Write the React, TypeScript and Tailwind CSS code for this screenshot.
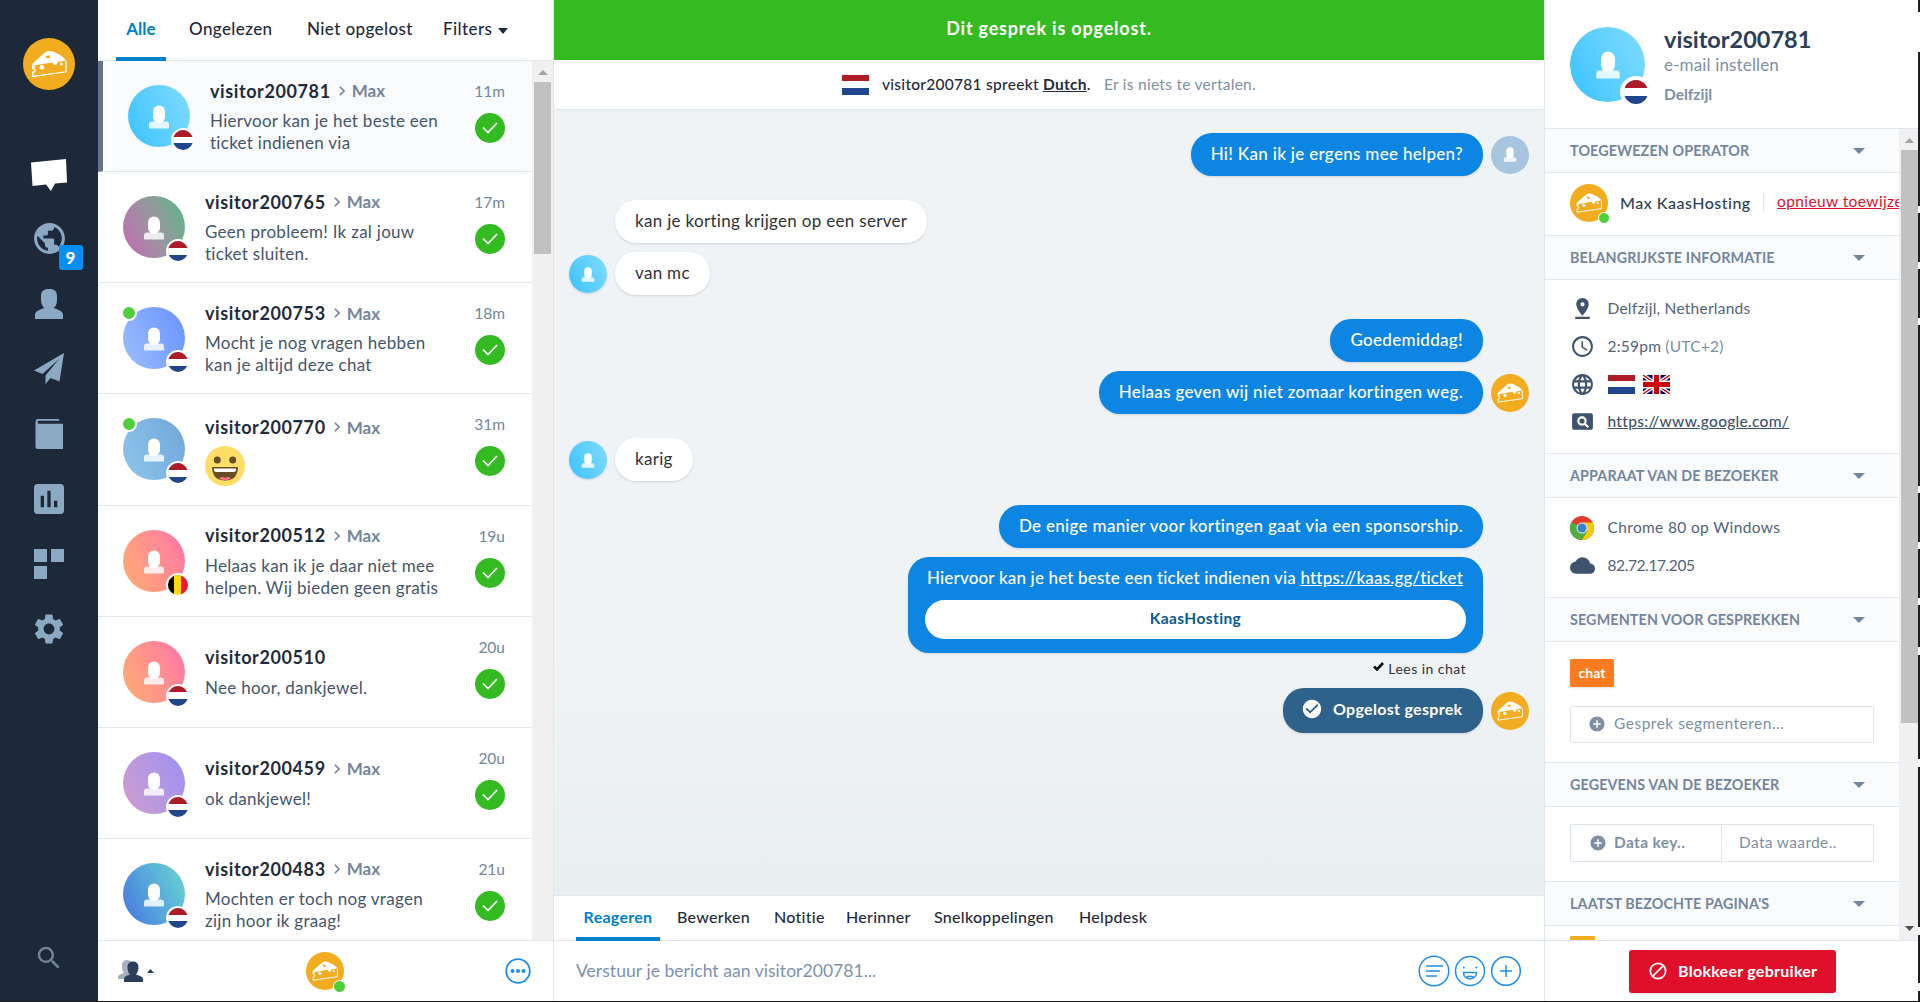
import type { ReactNode } from "react";
import {
  MdAccessTime,
  MdAddCircle,
  MdCheckCircle,
  MdCloud,
  MdInsertChart,
  MdLanguage,
  MdPageview,
  MdPinDrop,
  MdPublic,
  MdSearch,
  MdSettings,
} from "react-icons/md";

type Country = "nl" | "be";

interface Conversation {
  visitor: string;
  operator?: string;
  lines: string[];
  emoji?: boolean;
  time: string;
  gradient: string;
  country: Country;
  online?: boolean;
  active?: boolean;
}

const conversations: Conversation[] = [
  { visitor: "visitor200781", operator: "Max", lines: ["Hiervoor kan je het beste een", "ticket indienen via"], time: "11m", gradient: "from-[#35c2ff] to-[#7fdcff]", country: "nl", active: true },
  { visitor: "visitor200765", operator: "Max", lines: ["Geen probleem! Ik zal jouw", "ticket sluiten."], time: "17m", gradient: "from-[#c365b5] to-[#4bb885]", country: "nl" },
  { visitor: "visitor200753", operator: "Max", lines: ["Mocht je nog vragen hebben", "kan je altijd deze chat"], time: "18m", gradient: "from-[#9dbdfb] to-[#6692ff]", country: "nl", online: true },
  { visitor: "visitor200770", operator: "Max", lines: [], emoji: true, time: "31m", gradient: "from-[#8fc6ec] to-[#6fa6d8]", country: "nl", online: true },
  { visitor: "visitor200512", operator: "Max", lines: ["Helaas kan ik je daar niet mee", "helpen. Wij bieden geen gratis"], time: "19u", gradient: "from-[#ffae6c] to-[#ff72a6]", country: "be" },
  { visitor: "visitor200510", lines: ["Nee hoor, dankjewel."], time: "20u", gradient: "from-[#ffae6c] to-[#ff72a6]", country: "nl" },
  { visitor: "visitor200459", operator: "Max", lines: ["ok dankjewel!"], time: "20u", gradient: "from-[#d09dcf] to-[#9d90f2]", country: "nl" },
  { visitor: "visitor200483", operator: "Max", lines: ["Mochten er toch nog vragen", "zijn hoor ik graag!"], time: "21u", gradient: "from-[#4974e0] to-[#6bd8cf]", country: "nl" },
];

function CheeseLogo({ className }: { className: string }) {
  return (
    <svg viewBox="0 0 52 52" className={className}>
      <circle cx="26" cy="26" r="26" fill="#f2ac20" />
      <path d="M9 26 L22.5 14 Q25.5 12 30 13.6 Q38 16.5 43 22.2 L38.5 23.4 Q37.5 24 35 23.6 Q34.5 27.5 31.8 27 Q29.8 26.6 29.5 24.4 L10 27.6 Z" fill="#fff" />
      <path d="M9.7 26.5 L9.7 30.5 Q12.5 31 12 33 Q11.5 34.5 9.7 34 L9.7 38.5 L43 33.8 L43 22.8" fill="none" stroke="#fff" strokeWidth="1.3" />
      <circle cx="19" cy="29.3" r="2.3" fill="#fff" />
      <circle cx="38.3" cy="26" r="1.5" fill="#fff" />
      <circle cx="11.3" cy="28.8" r="1.1" fill="#fff" />
      <ellipse cx="25" cy="19" rx="2.2" ry="1.4" fill="#f2ac20" />
    </svg>
  );
}

function Person({ className }: { className: string }) {
  return (
    <svg viewBox="0 0 22 24" className={className} fill="#fff">
      <path d="M1 23.5 V19.5 Q1 16.5 4 16.5 H18 Q21 16.5 21 19.5 V23.5 Z" opacity="0.82" />
      <rect x="5" y="0.5" width="12" height="17.5" rx="6" />
    </svg>
  );
}

function RoundFlag({ country, className }: { country: Country; className: string }) {
  return (
    <span className={`absolute overflow-hidden rounded-full border-white ${className}`}>
      {country === "nl" ? (
        <span className="flex h-full flex-col">
          <span className="flex-1 bg-[#ae1c28]" />
          <span className="flex-1 bg-white" />
          <span className="flex-1 bg-[#21468b]" />
        </span>
      ) : (
        <span className="flex h-full">
          <span className="flex-1 bg-black" />
          <span className="flex-1 bg-[#ffd90c]" />
          <span className="flex-1 bg-[#f31830]" />
        </span>
      )}
    </span>
  );
}

function DutchFlag({ className }: { className: string }) {
  return (
    <span className={`flex flex-col ${className}`}>
      <span className="flex-1 bg-[#ae1c28]" />
      <span className="flex-1 bg-white" />
      <span className="flex-1 bg-[#21468b]" />
    </span>
  );
}

function BritishFlag({ className }: { className: string }) {
  return (
    <svg viewBox="0 0 27 19" className={className}>
      <rect width="27" height="19" fill="#006" />
      <path d="M0 0 L27 19 M27 0 L0 19" stroke="#fff" strokeWidth="4" />
      <path d="M0 0 L27 19 M27 0 L0 19" stroke="#c00" strokeWidth="1.4" />
      <path d="M13.5 0 V19 M0 9.5 H27" stroke="#fff" strokeWidth="8" />
      <path d="M13.5 0 V19 M0 9.5 H27" stroke="#c00" strokeWidth="5" />
    </svg>
  );
}

function Caret({ className, up }: { className: string; up?: boolean }) {
  return (
    <svg viewBox="0 0 12 6" preserveAspectRatio="none" className={className} fill="currentColor">
      <path d={up ? "M0 6 L6 0 L12 6 Z" : "M0 0 H12 L6 6 Z"} />
    </svg>
  );
}

function GrinEmoji() {
  return (
    <svg viewBox="0 0 40 40" className="h-10 w-10">
      <circle cx="20" cy="20" r="20" fill="#ffdd67" />
      <circle cx="12.3" cy="14" r="3.5" fill="#664e27" />
      <circle cx="27.7" cy="14" r="3.5" fill="#664e27" />
      <path d="M7 22 Q7 21 8 21 H32 Q33 21 33 22 Q32 34.5 20 34.5 Q8 34.5 7 22 Z" fill="#664e27" />
      <path d="M9 22.5 H31 V24 Q31 26 29 26 H11 Q9 26 9 24 Z" fill="#fff" />
      <path d="M14 32.5 Q17 30 20 32 Q23 30 26 32.5 Q20 36 14 32.5 Z" fill="#ff717f" />
    </svg>
  );
}

function NavSlot({ children }: { children: ReactNode }) {
  return <div className="flex h-[65px] w-full items-center justify-center">{children}</div>;
}

function Sidebar() {
  return (
    <nav className="flex w-[98px] shrink-0 flex-col items-center bg-[#1d2939] pt-[38px] text-[#8ba9c3]">
      <CheeseLogo className="h-[52px] w-[52px]" />
      <div className="mt-[51px] flex w-full flex-col">
        <NavSlot>
          <svg viewBox="0 0 36 32" className="mt-[2px] h-8 w-9" fill="#fff">
            <path d="M0 3.5 L35 0 L36 23.5 L24 24.5 L20 32 L15 25.5 L1.5 27 Z" />
          </svg>
        </NavSlot>
        <NavSlot>
          <div className="relative">
            <MdPublic className="h-[37px] w-[37px]" />
            <span className="absolute top-[25px] left-[28px] flex h-[25px] w-6 items-center justify-center rounded-[3px] bg-[#058ff0] text-[17px] font-black text-white">9</span>
          </div>
        </NavSlot>
        <NavSlot>
          <svg viewBox="0 0 28 30" className="h-[30px] w-7" fill="currentColor">
            <path d="M14 0 C19.5 0 22 2.5 22 7 V11 C22 15 20.5 17.5 18.5 19 C23.5 20.5 28 22.5 28 25.5 V30 H0 V25.5 C0 22.5 4.5 20.5 9.5 19 C7.5 17.5 6 15 6 11 V7 C6 2.5 8.5 0 14 0 Z" />
          </svg>
        </NavSlot>
        <NavSlot>
          <svg viewBox="0 0 30 31" className="h-[31px] w-[30px]" fill="currentColor">
            <path d="M30 0 L0 17.5 L8.5 21 L25 6 L11.5 22.5 L11.5 31 L16.5 25 L25.5 28.5 Z" />
          </svg>
        </NavSlot>
        <NavSlot>
          <svg viewBox="0 0 28 30" className="h-[30px] w-7" fill="currentColor">
            <path d="M3 0 H23 Q24.5 0 24.5 1.7 H4 Q2.5 1.7 2.5 3 Q2.5 4.8 4 4.8 H28 V30 H3 Q0.5 30 0.5 27.5 V3 Q0.5 0 3 0 Z" />
          </svg>
        </NavSlot>
        <NavSlot>
          <MdInsertChart className="h-10 w-10" />
        </NavSlot>
        <NavSlot>
          <svg viewBox="0 0 30 30" className="h-[30px] w-[30px]" fill="currentColor">
            <rect width="13" height="13" />
            <rect x="17" width="13" height="13" />
            <rect y="17" width="13" height="13" />
          </svg>
        </NavSlot>
        <NavSlot>
          <MdSettings className="h-9 w-9" />
        </NavSlot>
      </div>
      <MdSearch className="mt-auto mb-7 h-[30px] w-[30px] text-[#73859b]" />
    </nav>
  );
}

function ConversationRow({ item }: { item: Conversation }) {
  return (
    <div
      className={`flex h-[111.15px] shrink-0 items-center border-b border-[#e1e7ef] pr-[27px] ${
        item.active ? "border-l-[5px] border-l-[#657287] bg-[#f9fbfd]" : "bg-white"
      }`}
    >
      <div className="relative ml-[25px] shrink-0">
        <div className={`flex h-[62px] w-[62px] items-center justify-center rounded-full bg-linear-65 ${item.gradient}`}>
          <Person className="mt-[2px] h-6 w-[22px]" />
        </div>
        <RoundFlag country={item.country} className="right-[-4.5px] bottom-[-5px] h-6 w-6 border-[2.5px]" />
        {item.online && <span className="absolute top-[-2px] left-[-2px] h-[16px] w-[16px] rounded-full border-2 border-white bg-[#4fcf3b]" />}
      </div>
      <div className="ml-5 flex-1 pt-px">
        <div className="flex h-6 items-center whitespace-nowrap text-[18px] font-bold tracking-[0.6px] text-[#1f2b3d]">
          {item.visitor}
          {item.operator && (
            <>
              <svg viewBox="0 0 6 10" className="mr-[7px] ml-2 h-[10px] w-[6px]" fill="none" stroke="#74859e" strokeWidth="1.6">
                <path d="M0.8 0.8 L5 5 L0.8 9.2" />
              </svg>
              <span className="text-[17px] tracking-normal text-[#74859e]">{item.operator}</span>
            </>
          )}
        </div>
        {item.emoji ? (
          <div className="mt-[7px] h-[38px]">
            <GrinEmoji />
          </div>
        ) : (
          <div className="mt-[7px] text-[17px] leading-[22px] tracking-[0.28px] whitespace-nowrap text-[#45556d]">
            {item.lines.map((line) => (
              <div key={line}>{line}</div>
            ))}
          </div>
        )}
      </div>
      <div className="flex flex-col items-end">
        <span className="h-[38px] text-[15.5px] leading-[32px] text-[#74859e]">{item.time}</span>
        <span className="mb-[14px] flex h-[30px] w-[30px] items-center justify-center rounded-full bg-[#34bb21]">
          <svg viewBox="0 0 16 12" className="h-3 w-4" fill="none" stroke="#fff" strokeWidth="1.7">
            <path d="M1 5.5 L6 10.5 L15 1" />
          </svg>
        </span>
      </div>
    </div>
  );
}

function ConversationList() {
  return (
    <section className="flex w-[456px] shrink-0 flex-col border-r border-[#dfe6ee] bg-white">
      <div className="flex h-[61px] shrink-0 border-b border-[#e1e7ef] pl-[18px] text-[17px] font-medium tracking-[0.4px] whitespace-nowrap text-[#1f2b3d]">
        <div className="relative flex w-[50px] items-center justify-center pb-[3px] font-bold tracking-normal text-[#0080c8]">
          Alle
          <span className="absolute bottom-[-1px] left-0 h-1 w-full bg-[#0080c8]" />
        </div>
        <div className="ml-[23px] flex w-[118px] items-center pb-[3px]">Ongelezen</div>
        <div className="flex w-[136px] items-center pb-[3px]">Niet opgelost</div>
        <div className="flex items-center pb-[3px]">
          Filters
          <Caret className="mt-1 ml-[6px] h-[6px] w-[10px]" />
        </div>
      </div>
      <div className="flex min-h-0 flex-1">
        <div className="flex min-w-0 flex-1 flex-col overflow-hidden">
          {conversations.map((item) => (
            <ConversationRow key={item.visitor} item={item} />
          ))}
        </div>
        <div className="flex w-[21px] flex-col items-center bg-[#f0f0f0] pt-[9px]">
          <Caret up className="h-[5px] w-[10px] text-[#a3a3a3]" />
          <div className="mt-[7px] h-[172px] w-[17px] bg-[#c1c1c1]" />
        </div>
      </div>
      <div className="flex h-[61px] shrink-0 items-center border-t border-[#e1e7ef] pr-[22px] pl-5">
        <svg viewBox="0 0 25 22" className="h-[22px] w-[25px]">
          <path d="M9 0 C13 0 14 3 14 6 C14 10 12 12 11 13 C14 14 17 15 17 19 H0 V17 C0 15 3 14 6 13 C4 11 4 9 4 6 C4 3 5 0 9 0 Z" fill="#a5b1bf" />
          <path d="M15 1.5 C19 1.5 20.5 4 20.5 7.5 C20.5 11 19 13 18 14.5 C21 15.5 25 16.5 25 19.5 V22 H6 V19.5 C6 16.5 9 15.5 12 14.5 C10.5 13 9.5 11 9.5 7.5 C9.5 4 11 1.5 15 1.5 Z" fill="#2c3f5a" />
        </svg>
        <Caret up className="ml-1 h-1 w-[7px] text-[#2c3f5a]" />
        <div className="relative mr-auto ml-[152px]">
          <CheeseLogo className="h-[38px] w-[38px]" />
          <span className="absolute right-[-2px] bottom-[-3px] h-[13px] w-[13px] rounded-full border border-white bg-[#4fcf3b]" />
        </div>
        <svg viewBox="0 0 26 26" className="h-[26px] w-[26px]" fill="none" stroke="#1e8ff0" strokeWidth="1.8">
          <circle cx="13" cy="13" r="11.8" />
          <g fill="#1e8ff0" stroke="none">
            <circle cx="7.5" cy="13" r="2" />
            <circle cx="13" cy="13" r="2" />
            <circle cx="18.5" cy="13" r="2" />
          </g>
        </svg>
      </div>
    </section>
  );
}

function VisitorBubble({ children, avatar, last }: { children: string; avatar?: boolean; last?: boolean }) {
  return (
    <div className={`flex h-[43px] items-center ${last ? "mb-6" : "mb-[9px]"}`}>
      {avatar ? (
        <div className="mt-[1px] mr-[8px] flex h-[38px] w-[38px] items-center justify-center rounded-full bg-linear-65 from-[#35c2ff] to-[#7fdcff] shadow-sm">
          <Person className="h-[15px] w-[14px]" />
        </div>
      ) : (
        <div className="w-[46px]" />
      )}
      <div className="flex h-[43px] items-center rounded-[21px] bg-white px-5 pb-[2px] text-[17px] tracking-[0.31px] text-[#2f3338] shadow-sm">{children}</div>
    </div>
  );
}

function OperatorBubble({ children, avatar, last }: { children: string; avatar?: ReactNode; last?: boolean }) {
  return (
    <div className={`flex h-[43px] items-center justify-end ${last ? "mb-6" : "mb-[9px]"}`}>
      <div className="flex h-[43px] items-center rounded-[21px] bg-[#0d85e2] px-5 pb-[2px] text-[17px] font-medium tracking-[0.31px] text-white shadow-sm">{children}</div>
      <div className="ml-2 h-[38px] w-[38px]">{avatar}</div>
    </div>
  );
}

function ChatPanel() {
  return (
    <main className="flex w-[990px] shrink-0 flex-col bg-white">
      <div className="flex h-[60px] shrink-0 items-center justify-center bg-[#34bb21] pb-1 text-[18px] font-bold tracking-[0.8px] text-white">Dit gesprek is opgelost.</div>
      <div className="flex h-[50px] shrink-0 items-center border-b border-[#dde4ea] bg-white pl-[288px] text-[15.5px] tracking-[0.27px] whitespace-nowrap text-[#1f2b3d]">
        <DutchFlag className="h-5 w-[27px]" />
        <span className="ml-[13px] w-[222px] font-medium">
          visitor200781 spreekt <span className="font-bold underline">Dutch</span>.
        </span>
        <span className="text-[#7e8fa6]">Er is niets te vertalen.</span>
      </div>
      <div className="flex min-h-0 flex-1 flex-col bg-linear-to-b from-[#eff3f6] from-70% to-[#e9eef1] pt-[23px] pr-[15px] pl-[15px]">
        <OperatorBubble
          last
          avatar={
            <div className="flex h-[38px] w-[38px] items-center justify-center rounded-full bg-[#a8c5e0]">
              <Person className="h-[15px] w-[14px]" />
            </div>
          }
        >
          Hi! Kan ik je ergens mee helpen?
        </OperatorBubble>
        <VisitorBubble>kan je korting krijgen op een server</VisitorBubble>
        <VisitorBubble avatar last>van mc</VisitorBubble>
        <OperatorBubble>Goedemiddag!</OperatorBubble>
        <OperatorBubble last avatar={<CheeseLogo className="h-[38px] w-[38px]" />}>
          Helaas geven wij niet zomaar kortingen weg.
        </OperatorBubble>
        <VisitorBubble avatar last>karig</VisitorBubble>
        <OperatorBubble>De enige manier voor kortingen gaat via een sponsorship.</OperatorBubble>
        <div className="mr-[46px] flex h-24 w-[575px] flex-col self-end rounded-[21px] bg-[#0d85e2] px-[17px] pt-2 text-[17px] font-medium text-white shadow-sm">
          <div className="h-[35px] pl-[2px] tracking-[0.17px] whitespace-nowrap">
            Hiervoor kan je het beste een ticket indienen via <span className="underline">https://kaas.gg/ticket</span>
          </div>
          <div className="flex h-[39px] items-center justify-center rounded-full bg-white pb-[2px] text-[15.5px] font-bold tracking-[0.4px] text-[#085a96]">KaasHosting</div>
        </div>
        <div className="mt-[4px] mr-[63px] flex h-[22px] items-center self-end text-[14px] tracking-[0.45px] text-[#2f3338]">
          <svg viewBox="0 0 11 9" className="mr-1 mb-1 h-[9px] w-[11px]" fill="none" stroke="#111" strokeWidth="2.6">
            <path d="M1 4.5 L4 7.5 L10 1" />
          </svg>
          Lees in chat
        </div>
        <div className="mt-[9px] flex items-center justify-end">
          <div className="flex h-[45px] w-[200px] items-center rounded-[21px] bg-[#2e628b] pb-[4px] pl-[18px] text-[16px] font-bold tracking-[0.3px] whitespace-nowrap text-white shadow-sm">
            <MdCheckCircle className="mr-[10px] h-[22px] w-[22px]" />
            Opgelost gesprek
          </div>
          <CheeseLogo className="mt-[1px] ml-2 h-[38px] w-[38px]" />
        </div>
      </div>
      <div className="flex h-[46px] shrink-0 border-y border-[#e1e7ef] pl-[22px] text-[16px] font-medium tracking-[0.28px] whitespace-nowrap text-[#1f2b3d]">
        <div className="relative flex w-[84px] items-center justify-center pb-[2px] font-bold text-[#0080c8]">
          Reageren
          <span className="absolute bottom-[-1px] left-0 h-1 w-full bg-[#0080c8]" />
        </div>
        <div className="ml-[17px] flex w-[97px] items-center pb-[2px]">Bewerken</div>
        <div className="flex w-[72px] items-center pb-[2px]">Notitie</div>
        <div className="flex w-[88px] items-center pb-[2px]">Herinner</div>
        <div className="flex w-[145px] items-center pb-[2px]">Snelkoppelingen</div>
        <div className="flex items-center pb-[2px]">Helpdesk</div>
      </div>
      <div className="flex h-[60px] shrink-0 items-center pr-[22px] pl-[22px] text-[17.5px] tracking-[0.05px] text-[#7e92ad]">
        <span className="flex-1">Verstuur je bericht aan visitor200781...</span>
        <div className="flex gap-1">
          <svg viewBox="0 0 32 32" className="h-8 w-8" fill="none" stroke="#1e8ff0" strokeWidth="1.5">
            <circle cx="16" cy="16" r="14.8" />
            <path d="M8 11 H25 M8 16 H22 M8 21 H19" />
          </svg>
          <svg viewBox="0 0 32 32" className="h-8 w-8" fill="none" stroke="#1e8ff0" strokeWidth="1.5">
            <circle cx="16" cy="16" r="14.5" />
            <path d="M9.5 17.5 H22.5 C22.5 26 9.5 26 9.5 17.5 Z M12 22.5 Q16 20 20 22.5" />
            <circle cx="9.8" cy="12.5" r="1" fill="#1e8ff0" stroke="none" />
            <circle cx="22.3" cy="12.5" r="1" fill="#1e8ff0" stroke="none" />
          </svg>
          <svg viewBox="0 0 32 32" className="h-8 w-8" fill="none" stroke="#1e8ff0" strokeWidth="1.5">
            <circle cx="16" cy="16" r="14.3" />
            <path d="M16 10 V22 M10 16 H22" />
          </svg>
        </div>
      </div>
    </main>
  );
}

function SectionHeader({ title }: { title: string }) {
  return (
    <div className="flex h-11 shrink-0 items-center justify-between border-b border-[#e1e7ef] bg-[#f9fbfd] pr-[34px] pl-[25px] text-[14.3px] font-bold tracking-[0.14px] text-[#74859e]">
      {title}
      <Caret className="h-[6px] w-3" />
    </div>
  );
}

function InfoRow({ icon, children }: { icon: ReactNode; children: ReactNode }) {
  return (
    <div className="flex h-[37.67px] items-center text-[15.5px] tracking-[0.25px] text-[#52637c]">
      <span className="mr-[13px] flex w-[25px] justify-center text-[#40536e]">{icon}</span>
      {children}
    </div>
  );
}

function ChromeLogo() {
  return (
    <svg viewBox="0 0 24 24" className="h-6 w-6">
      <circle cx="12" cy="12" r="12" fill="#e33b2e" />
      <path d="M12 12 L1.6 6 A12 12 0 0 0 12 24 L17.2 15 Z" fill="#4caf40" />
      <path d="M12 12 L12 24 A12 12 0 0 0 22.6 6.5 L12 6.5 Z" fill="#f7cb05" />
      <path d="M6.5 13 L17.5 15 L12 24 Z" fill="#4caf40" />
      <circle cx="12" cy="12" r="5.5" fill="#dfeaf5" />
      <circle cx="12" cy="12" r="4.5" fill="#3b82c8" />
    </svg>
  );
}

function DetailsPanel() {
  return (
    <aside className="flex w-[374px] shrink-0 flex-col border-l border-[#dfe6ee] bg-white">
      <div className="flex h-[129px] shrink-0 border-b border-[#e1e7ef] pt-[27px] pl-[25px]">
        <div className="relative h-[75px] w-[75px]">
          <div className="flex h-full w-full items-center justify-center rounded-full bg-linear-65 from-[#35c2ff] to-[#7fdcff]">
            <Person className="h-7 w-[28px]" />
          </div>
          <RoundFlag country="nl" className="right-[-7px] bottom-[-6px] h-8 w-8 border-4" />
        </div>
        <div className="mt-[-3px] ml-[19px]">
          <div className="h-[28px] text-[23.5px] leading-[30px] font-bold text-[#2c3f5a]">visitor200781</div>
          <div className="h-[27px] text-[17px] leading-[26px] tracking-[0.15px] text-[#7e8fa6]">e-mail instellen</div>
          <div className="text-[15.5px] leading-[31px] font-bold text-[#7e8fa6]">Delfzijl</div>
        </div>
      </div>
      <div className="flex min-h-0 flex-1">
        <div className="flex w-[354px] flex-col overflow-hidden">
          <SectionHeader title="TOEGEWEZEN OPERATOR" />
          <div className="flex h-[63px] shrink-0 items-center border-b border-[#e1e7ef] pb-[2px] pl-[25px] whitespace-nowrap">
            <div className="relative shrink-0">
              <CheeseLogo className="h-[38px] w-[38px]" />
              <span className="absolute right-[-2px] bottom-[-2px] h-3 w-3 rounded-full border border-white bg-[#4fcf3b]" />
            </div>
            <span className="ml-3 w-[143px] shrink-0 text-[16px] font-medium tracking-[0.5px] text-[#2c3f5a]">Max KaasHosting</span>
            <span className="h-[18px] w-px shrink-0 bg-[#dfe6ee]" />
            <span className="ml-[13px] pb-[2px] text-[15.5px] tracking-[0.4px] text-[#e0102a] underline">opnieuw toewijzen</span>
          </div>
          <SectionHeader title="BELANGRIJKSTE INFORMATIE" />
          <div className="h-[174px] shrink-0 border-b border-[#e1e7ef] pt-[10px] pl-[24.5px]">
            <InfoRow icon={<MdPinDrop className="h-[25px] w-[25px]" />}>Delfzijl, Netherlands</InfoRow>
            <InfoRow icon={<MdAccessTime className="h-[25px] w-[25px]" />}>
              2:59pm <span className="ml-1 text-[#7e8fa6]">(UTC+2)</span>
            </InfoRow>
            <InfoRow icon={<MdLanguage className="h-[25px] w-[25px]" />}>
              <DutchFlag className="mr-2 h-[19px] w-[27px]" />
              <BritishFlag className="h-[19px] w-[27px]" />
            </InfoRow>
            <InfoRow icon={<MdPageview className="h-[25px] w-[25px]" />}>
              <span className="font-medium tracking-[0.29px] text-[#40536e] underline">https://www.google.com/</span>
            </InfoRow>
          </div>
          <SectionHeader title="APPARAAT VAN DE BEZOEKER" />
          <div className="h-[100px] shrink-0 border-b border-[#e1e7ef] pt-[11px] pl-[24.5px]">
            <InfoRow icon={<ChromeLogo />}>
              <span className="tracking-[0.35px]">Chrome 80 op Windows</span>
            </InfoRow>
            <InfoRow icon={<MdCloud className="h-[25px] w-[25px]" />}>
              <span className="tracking-[-0.4px]">82.72.17.205</span>
            </InfoRow>
          </div>
          <SectionHeader title="SEGMENTEN VOOR GESPREKKEN" />
          <div className="h-[121px] shrink-0 border-b border-[#e1e7ef] pt-[17px] pr-[25px] pl-[25px]">
            <span className="flex h-7 w-11 items-center justify-center rounded-[2px] bg-[#ff7b20] pb-[2px] text-[14px] font-bold text-white shadow-sm">chat</span>
            <div className="mt-[19px] flex h-[37px] items-center rounded-[2px] border border-[#dfe6ee] pb-px pl-[17px] text-[15.5px] tracking-[0.5px] text-[#7e8fa6]">
              <MdAddCircle className="mr-2 h-[18px] w-[18px]" />
              Gesprek segmenteren...
            </div>
          </div>
          <SectionHeader title="GEGEVENS VAN DE BEZOEKER" />
          <div className="h-[75px] shrink-0 border-b border-[#e1e7ef] pt-[17px] pr-[25px] pl-[25px]">
            <div className="flex h-[38px] items-center border border-[#dfe6ee] text-[15.5px] tracking-[0.35px] text-[#7e8fa6]">
              <div className="flex h-full w-[151px] items-center border-r border-[#dfe6ee] pl-[18px] font-bold">
                <MdAddCircle className="mr-[7px] h-[18px] w-[18px]" />
                Data key..
              </div>
              <span className="ml-[17px]">Data waarde..</span>
            </div>
          </div>
          <SectionHeader title="LAATST BEZOCHTE PAGINA'S" />
          <div className="mt-[10px] ml-[25px] h-[25px] w-[25px] shrink-0 rounded-[1px] bg-[#f2ac20]" />
        </div>
        <div className="flex w-[19px] flex-col items-end bg-[#f0f0f0] pt-[9px]">
          <Caret up className="mr-1 h-[5px] w-[9px] text-[#a3a3a3]" />
          <div className="mt-[7px] h-[573px] w-[17px] bg-[#c1c1c1]" />
          <Caret className="mt-auto mr-1 mb-[9px] h-[5px] w-[9px] text-[#505050]" />
        </div>
      </div>
      <div className="flex h-[61px] shrink-0 border-t border-[#e1e7ef] pt-[9px] pl-[84px]">
        <button className="flex h-[43px] w-[207px] items-center rounded-[3px] bg-[#e0102a] pb-[2px] pl-5 text-[16px] font-bold tracking-[0.27px] whitespace-nowrap text-white shadow-sm">
          <svg viewBox="0 0 18 18" className="mr-[11px] h-[18px] w-[18px]" fill="none" stroke="#fff" strokeWidth="1.7">
            <circle cx="9" cy="9" r="7.7" />
            <path d="M3.8 14.2 L14.2 3.8" />
          </svg>
          Blokkeer gebruiker
        </button>
      </div>
    </aside>
  );
}

// Heights of the dark segments along the window edge, separated by light notches.
const edgeSegments = ["mb-[40px] h-3", "mb-[7px] h-[154px]", "mb-[7px] h-[49px]", "mb-[7px] h-[49px]", "mb-[7px] h-[161px]", "mb-[7px] h-[49px]", "mb-[7px] h-[49px]", "mb-[8px] h-[42px]", "mb-[8px] h-[104px]", "mb-[8px] h-[160px]", "mb-[8px] h-[48px]", "h-3"];

export default function App() {
  return (
    <div className="flex h-[1002px] w-[1920px] flex-col overflow-hidden bg-white font-['Lato','Liberation_Sans',sans-serif]">
      <div className="flex h-[1001px] shrink-0">
        <Sidebar />
        <ConversationList />
        <ChatPanel />
        <DetailsPanel />
        <div className="flex w-[2px] flex-col overflow-hidden">
          {edgeSegments.map((segment, index) => (
            <span key={index} className={`shrink-0 bg-[#1d1f24] ${segment}`} />
          ))}
        </div>
      </div>
      <div className="h-px bg-[#1a1a1a]" />
    </div>
  );
}
